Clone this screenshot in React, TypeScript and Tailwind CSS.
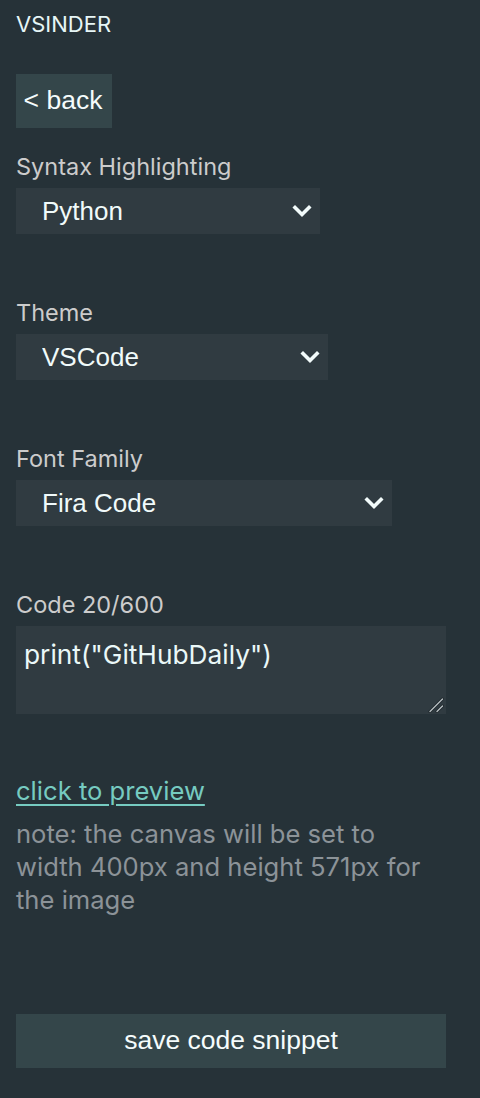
import React from "react";

function Chevron() {
  return (
    <svg width="20" height="14" viewBox="0 0 20 14" className="pointer-events-none absolute right-[8px] top-1/2 -translate-y-1/2">
      <path d="M3 3.5 L10 10.5 L17 3.5" fill="none" stroke="#f2fbfb" strokeWidth="3.6" strokeLinecap="square" strokeLinejoin="miter" />
    </svg>
  );
}

function Field({ label, value, width, options }: { label: string; value: string; width: string; options: string[] }) {
  return (
    <div className="flex flex-col">
      <div className="text-[23.5px] leading-[30px] text-[#cccccc] font-['Inter',sans-serif]">{label}</div>
      <div className={`relative mt-[6px] ${width}`}>
        <select
          defaultValue={value}
          className="h-[46px] w-full appearance-none bg-[#303b41] pl-[26px] pr-[40px] text-[26px] text-[#f0fafa] font-['Liberation_Sans',Arial,sans-serif] outline-none border-0 rounded-none"
        >
          {options.map((o) => (
            <option key={o} value={o}>
              {o}
            </option>
          ))}
        </select>
        <Chevron />
      </div>
    </div>
  );
}

export default function App() {
  return (
    <div className="min-h-[1098px] w-[480px] bg-[#263238] px-[16px] pt-[11px] pb-[30px]">
      <div className="text-[22px] leading-[26px] text-[#e6f6f6] font-['Inter',sans-serif]">VSINDER</div>

      <button className="mt-[37px] h-[54px] w-[96px] bg-[#34464a] pr-[2px] text-[26.5px] text-[#f5fcfc] font-['Liberation_Sans',Arial,sans-serif] flex items-center justify-center">
        &lt; back
      </button>

      <div className="mt-[24px] flex flex-col">
        <Field label="Syntax Highlighting" value="Python" width="w-[304px]" options={["Python", "JavaScript"]} />
      </div>
      <div className="mt-[64px] flex flex-col">
        <Field label="Theme" value="VSCode" width="w-[312px]" options={["VSCode", "Dracula"]} />
      </div>
      <div className="mt-[64px] flex flex-col">
        <Field label="Font Family" value="Fira Code" width="w-[376px]" options={["Fira Code", "Monospace"]} />
      </div>

      <div className="mt-[64px] flex flex-col">
        <div className="text-[23.5px] leading-[30px] text-[#cccccc] font-['Inter',sans-serif]">Code 20/600</div>
        <div className="relative mt-[6px] w-[430px]">
          <textarea
            defaultValue={'print("GitHubDaily")'}
            className="block h-[88px] w-[430px] bg-[#303b41] px-[8px] pt-[14px] pb-[4px] text-[26.3px] leading-[30px] text-[#eaf8f8] font-['Inter',sans-serif] outline-none border-0 resize-none"
          />
          <svg width="16" height="16" viewBox="0 0 16 16" className="pointer-events-none absolute right-[2px] bottom-[1px]">
            <path d="M2 14.5 L14.5 2" stroke="#1a2226" strokeWidth="3" strokeLinecap="round" />
            <path d="M2 14.5 L14.5 2" stroke="#b4bcc0" strokeWidth="1.4" strokeLinecap="round" />
            <path d="M9 14.5 L14.5 9" stroke="#1a2226" strokeWidth="3" strokeLinecap="round" />
            <path d="M9 14.5 L14.5 9" stroke="#b4bcc0" strokeWidth="1.4" strokeLinecap="round" />
          </svg>
        </div>
      </div>

      <div className="mt-[61px]">
        <a href="#" className="text-[25.6px] leading-[32px] text-[#76cbc1] underline underline-offset-[4px] font-['Inter',sans-serif]">
          click to preview
        </a>
      </div>
      <p className="mt-[10px] w-[420px] text-[25.6px] leading-[33px] text-[#8c9398] font-['Inter',sans-serif]">
        note: the canvas will be set to width 400px and height 571px for the image
      </p>

      <button className="mt-[98px] h-[54px] w-[430px] bg-[#34464a] text-[26.5px] text-[#f5fcfc] font-['Liberation_Sans',Arial,sans-serif] flex items-center justify-center">
        save code snippet
      </button>
    </div>
  );
}
